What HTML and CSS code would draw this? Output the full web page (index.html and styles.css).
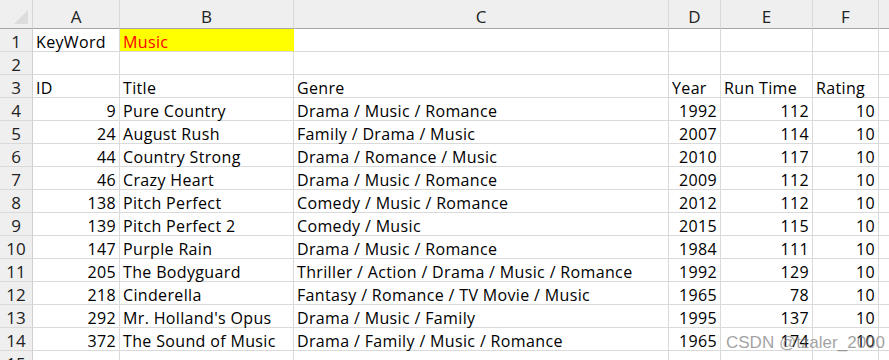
FILE: index.html
```html
<!DOCTYPE html>
<html>
<head>
<meta charset="utf-8">
<link rel="stylesheet" href="styles.css">
</head>
<body>
<div class="sheet">
  <div class="grid">
    <div class="corner"><span class="tri"></span></div>
    <div class="ch">A</div><div class="ch">B</div><div class="ch">C</div><div class="ch">D</div><div class="ch">E</div><div class="ch">F</div><div class="ch"></div>

    <div class="rh">1</div><div class="c">KeyWord</div><div class="c key">Music</div><div class="c"></div><div class="c"></div><div class="c"></div><div class="c"></div><div class="c"></div>
    <div class="rh">2</div><div class="c"></div><div class="c"></div><div class="c"></div><div class="c"></div><div class="c"></div><div class="c"></div><div class="c"></div>
    <div class="rh">3</div><div class="c">ID</div><div class="c">Title</div><div class="c">Genre</div><div class="c">Year</div><div class="c">Run Time</div><div class="c">Rating</div><div class="c"></div>

    <div class="rh">4</div><div class="c n">9</div><div class="c">Pure Country</div><div class="c">Drama / Music / Romance</div><div class="c n">1992</div><div class="c n">112</div><div class="c n">10</div><div class="c"></div>
    <div class="rh">5</div><div class="c n">24</div><div class="c">August Rush</div><div class="c">Family / Drama / Music</div><div class="c n">2007</div><div class="c n">114</div><div class="c n">10</div><div class="c"></div>
    <div class="rh">6</div><div class="c n">44</div><div class="c">Country Strong</div><div class="c">Drama / Romance / Music</div><div class="c n">2010</div><div class="c n">117</div><div class="c n">10</div><div class="c"></div>
    <div class="rh">7</div><div class="c n">46</div><div class="c">Crazy Heart</div><div class="c">Drama / Music / Romance</div><div class="c n">2009</div><div class="c n">112</div><div class="c n">10</div><div class="c"></div>
    <div class="rh">8</div><div class="c n">138</div><div class="c">Pitch Perfect</div><div class="c">Comedy / Music / Romance</div><div class="c n">2012</div><div class="c n">112</div><div class="c n">10</div><div class="c"></div>
    <div class="rh">9</div><div class="c n">139</div><div class="c">Pitch Perfect 2</div><div class="c">Comedy / Music</div><div class="c n">2015</div><div class="c n">115</div><div class="c n">10</div><div class="c"></div>
    <div class="rh">10</div><div class="c n">147</div><div class="c">Purple Rain</div><div class="c">Drama / Music / Romance</div><div class="c n">1984</div><div class="c n">111</div><div class="c n">10</div><div class="c"></div>
    <div class="rh">11</div><div class="c n">205</div><div class="c">The Bodyguard</div><div class="c">Thriller / Action / Drama / Music / Romance</div><div class="c n">1992</div><div class="c n">129</div><div class="c n">10</div><div class="c"></div>
    <div class="rh">12</div><div class="c n">218</div><div class="c">Cinderella</div><div class="c">Fantasy / Romance / TV Movie / Music</div><div class="c n">1965</div><div class="c n">78</div><div class="c n">10</div><div class="c"></div>
    <div class="rh">13</div><div class="c n">292</div><div class="c">Mr. Holland's Opus</div><div class="c">Drama / Music / Family</div><div class="c n">1995</div><div class="c n">137</div><div class="c n">10</div><div class="c"></div>
    <div class="rh">14</div><div class="c n">372</div><div class="c">The Sound of Music</div><div class="c">Drama / Family / Music / Romance</div><div class="c n">1965</div><div class="c n">174</div><div class="c n">10</div><div class="c"></div>
    <div class="rh">15</div><div class="c"></div><div class="c"></div><div class="c"></div><div class="c"></div><div class="c"></div><div class="c"></div><div class="c"></div>
  </div>
  <div class="watermark">CSDN @tzaler_2000</div>
</div>
</body>
</html>
```
FILE: styles.css
```css
html, body {
  margin: 0;
  padding: 0;
  background: #ffffff;
  overflow: hidden;
}
.sheet {
  position: relative;
  width: 889px;
  height: 360px;
  overflow: hidden;
  font-family: "Open Sans", "Liberation Sans", sans-serif;
  font-size: 16px;
  letter-spacing: 0.35px;
  color: #000;
}
.grid {
  display: grid;
  grid-template-columns: 33px 87px 174px 375px 52px 92px 66px 60px;
  grid-template-rows: 29px repeat(15, 23px);
}
.corner {
  position: relative;
  background: #efefef;
  border-right: 1px solid #d6d6d6;
  border-bottom: 1px solid #a6a6a6;
  box-sizing: border-box;
}
.tri {
  position: absolute;
  right: 4px;
  bottom: 4px;
  width: 0;
  height: 0;
  border-left: 14px solid transparent;
  border-bottom: 14px solid #dcdcdc;
}
.ch {
  background: #efefef;
  border-right: 1px solid #d9d9d9;
  border-bottom: 1px solid #a6a6a6;
  box-sizing: border-box;
  display: flex;
  align-items: flex-end;
  justify-content: center;
  padding-bottom: 3px;
  font-size: 17px;
  letter-spacing: 0;
  color: #222;
  line-height: 1;
}
.rh {
  background: #efefef;
  border-right: 1px solid #d0d0d0;
  border-bottom: 1px solid #d9d9d9;
  box-sizing: border-box;
  display: flex;
  align-items: center;
  justify-content: center;
  padding-top: 3px;
  font-size: 17px;
  letter-spacing: 0;
  color: #222;
  line-height: 1;
}
.c {
  border-right: 1px solid #dadada;
  border-bottom: 1px solid #dadada;
  box-sizing: border-box;
  display: flex;
  align-items: center;
  padding: 3px 3px 0 3px;
  white-space: nowrap;
  overflow: visible;
  line-height: 1;
}
.n {
  justify-content: flex-end;
}
.key {
  background: #ffff00;
  color: #ff0000;
  border-right-color: #ffff00;
}
.watermark {
  position: absolute;
  left: 726px;
  top: 333px;
  font-family: "Liberation Sans", sans-serif;
  font-size: 17px;
  letter-spacing: 0;
  color: rgba(120, 120, 120, 0.7);
  white-space: nowrap;
}
```
